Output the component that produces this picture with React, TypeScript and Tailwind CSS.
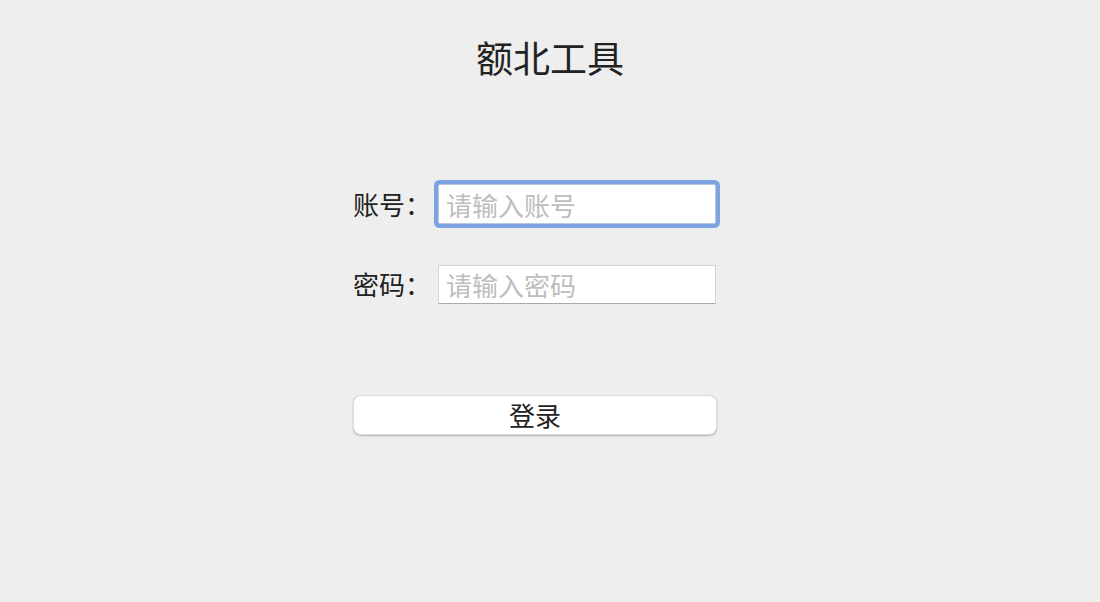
const font = {
    fontFamily: '"Noto Sans CJK SC", "Noto Sans", sans-serif',
};

export default function App() {
    return (
        <div
            className="min-h-[602px] w-full bg-[#eeeeee] text-[#222222]"
            style={font}
        >
            <h1 className="pt-[36px] text-center text-[37px] leading-[42px] font-normal">
                额北工具
            </h1>

            <div className="mx-auto mt-[106px] w-[394px] pr-[30px]">
                {/* 账号 */}
                <div className="flex items-center h-[40px]">
                    <label className="w-[85px] text-[26px] leading-[40px]">
                        账号：
                    </label>
                    <input
                        type="text"
                        placeholder="请输入账号"
                        className="w-[278px] h-[40px] bg-white border border-[#b9c8e4] rounded-[2px] px-[7px] text-[26px] text-[#222] placeholder:text-[#bdbdbd] outline-none shadow-[0_0_0_4px_#7ea3e3]"
                        style={font}
                    />
                </div>

                {/* 密码 */}
                <div className="flex items-center h-[40px] mt-[40px]">
                    <label className="w-[85px] text-[26px] leading-[40px]">
                        密码：
                    </label>
                    <input
                        type="password"
                        placeholder="请输入密码"
                        className="w-[278px] h-[39px] bg-white border border-[#d6d6d6] border-b-[#a9a9a9] px-[7px] text-[26px] text-[#222] placeholder:text-[#bdbdbd] outline-none"
                        style={font}
                    />
                </div>

                <button
                    className="mt-[91px] w-[364px] h-[40px] bg-white rounded-[8px] border border-[#dcdcdc] shadow-[0_1px_2px_rgba(0,0,0,0.25)] text-[26px] leading-[38px] text-[#222]"
                    style={font}
                >
                    登录
                </button>
            </div>
        </div>
    );
}
